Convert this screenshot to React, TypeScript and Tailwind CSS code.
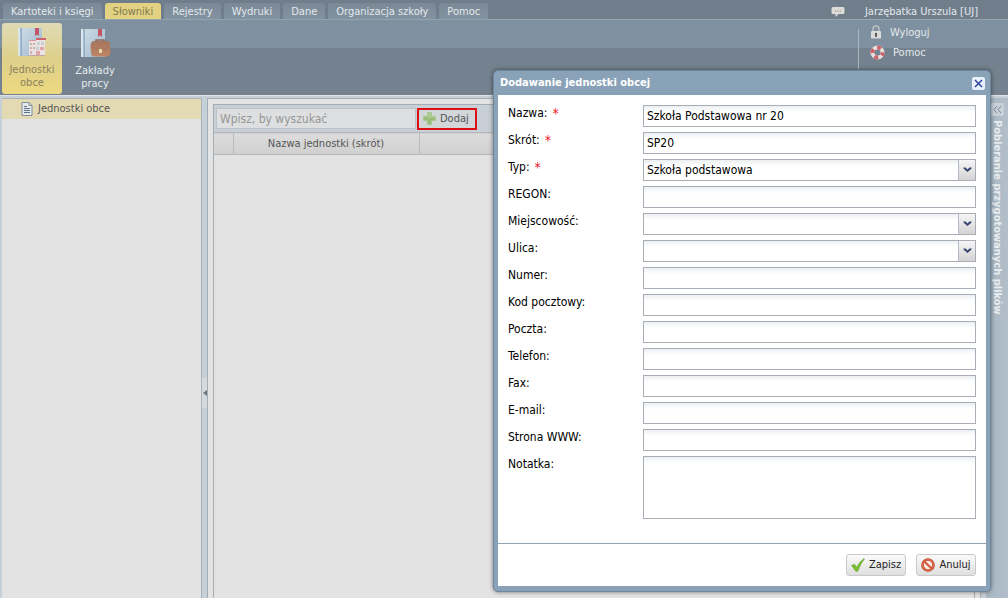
import React from "react";

type Field = { id: string; label: string; kind: "text" | "select" | "area"; value?: string; required?: boolean };

const tabs = ["Kartoteki i księgi", "Słowniki", "Rejestry", "Wydruki", "Dane", "Organizacja szkoły", "Pomoc"];

const fields: Field[] = [
  { id: "nazwa", label: "Nazwa:", kind: "text", value: "Szkoła Podstawowa nr 20", required: true },
  { id: "skrot", label: "Skrót:", kind: "text", value: "SP20", required: true },
  { id: "typ", label: "Typ:", kind: "select", value: "Szkoła podstawowa", required: true },
  { id: "regon", label: "REGON:", kind: "text" },
  { id: "miejscowosc", label: "Miejscowość:", kind: "select" },
  { id: "ulica", label: "Ulica:", kind: "select" },
  { id: "numer", label: "Numer:", kind: "text" },
  { id: "kod", label: "Kod pocztowy:", kind: "text" },
  { id: "poczta", label: "Poczta:", kind: "text" },
  { id: "telefon", label: "Telefon:", kind: "text" },
  { id: "fax", label: "Fax:", kind: "text" },
  { id: "email", label: "E-mail:", kind: "text" },
  { id: "www", label: "Strona WWW:", kind: "text" },
  { id: "notatka", label: "Notatka:", kind: "area" },
];

function Book() {
  return (
    <g>
      <rect x="2" y="1" width="24" height="28" fill="#b9cad7" />
      <rect x="2" y="1" width="3" height="28" fill="#dde5ea" />
      <path d="M6 1h20v28H6z" fill="url(#cover)" />
      <rect x="4.500" y="1" width="1" height="28" fill="#6f93b3" />
      <path d="M19 1h4v8l-2-1.500L19 9z" fill="#c25568" />
    </g>
  );
}

function Defs() {
  return (
    <defs>
      <linearGradient id="cover" x1="0" y1="0" x2="1" y2="1">
        <stop offset="0" stopColor="#cddbe5" />
        <stop offset="1" stopColor="#9db7cc" />
      </linearGradient>
      <linearGradient id="leather" x1="0" y1="0" x2="0" y2="1">
        <stop offset="0" stopColor="#a5765d" />
        <stop offset="1" stopColor="#bf8565" />
      </linearGradient>
    </defs>
  );
}

function UnitsIcon() {
  return (
    <svg width="32" height="32" viewBox="0 0 32 32" aria-hidden="true">
      <Defs />
      <Book />
      <path d="M13 14h7v-3h9v17H13z" fill="#e9e2e0" />
      <path d="M20 11h10v2H20z" fill="#d1606b" />
      <path d="M13 13h7v1h-7z" fill="#dd9799" />
      <g fill="#cfb3b2">
        <path d="M14 16h2v2h-2zM17 16h2v2h-2zM14 20h2v2h-2zM17 20h2v2h-2zM14 24h2v3h-2z" />
        <path d="M24 20h4v3h-4zM20 24h4v4h-4z" fill="#e0a5a6" />
      </g>
      <path d="M21 15h3v3h-3zM25 15h3v3h-3zM20 20h3v3h-3z" fill="#c9d0d4" />
      <path d="M13 28h16v1H13z" fill="#bda6a3" />
    </svg>
  );
}

function WorkIcon() {
  return (
    <svg width="32" height="32" viewBox="0 0 32 32" aria-hidden="true">
      <Book />
      <path d="M17 14v-2h8v2" fill="none" stroke="#8d6a58" strokeWidth="1.500" />
      <path d="M15 13h13q3 0 3 4l.5 8q-1 3.500-4 3.500H15.500q-3 0-3.500-3.500l-.5-7q.5-5 3.500-5z" fill="url(#leather)" />
      <path d="M12 19q9.500 5 19 0" fill="none" stroke="#a0705a" strokeWidth=".6" />
      <rect x="20" y="21" width="3" height="4" rx="1" fill="#ece0aa" />
    </svg>
  );
}

function DocIcon() {
  return (
    <svg width="12" height="14" viewBox="0 0 12 14" aria-hidden="true">
      <path d="M1 .5h7l3 3v10H1z" fill="#e6e9ea" stroke="#83909b" />
      <path d="M8 .5v3h3" fill="none" stroke="#83909b" />
      <path d="M3 4.500h3M3 6.500h6M3 8.500h6M3 10.500h6" stroke="#5d7389" />
    </svg>
  );
}

function ChatIcon() {
  return (
    <svg width="14" height="12" viewBox="0 0 14 12" aria-hidden="true">
      <path d="M2 1h10q1.500 0 1.500 1.500v4Q13.500 8 12 8H7.500L4.500 11V8H2Q.5 8 .5 6.500v-4Q.5 1 2 1z" fill="#dddcd6" />
      <path d="M4 5h1.200M6.400 5h1.200M8.800 5H10" stroke="#888" />
    </svg>
  );
}

function LockIcon() {
  return (
    <svg width="12" height="14" viewBox="0 0 12 14" aria-hidden="true">
      <path d="M3 7V4q0-3 3-3t3 3v3" fill="none" stroke="#b9bfc3" strokeWidth="1.500" />
      <rect x="1" y="6" width="10" height="7.500" rx="1" fill="#dcdcda" />
      <path d="M6 7.800a1.200 1.200 0 0 1 .8 2V12H5.200V9.800a1.200 1.200 0 0 1 .8-2z" fill="#444b50" />
    </svg>
  );
}

function BuoyIcon() {
  return (
    <svg width="15" height="15" viewBox="0 0 16 16" aria-hidden="true">
      <circle cx="8" cy="8" r="5.400" fill="none" stroke="#e6dedb" strokeWidth="4.200" />
      <circle cx="8" cy="8" r="5.400" fill="none" stroke="#cb626a" strokeWidth="4.200" strokeDasharray="4.240 4.242" strokeDashoffset="1" />
    </svg>
  );
}

function PlusIcon() {
  return (
    <svg width="13" height="13" viewBox="0 0 13 13" aria-hidden="true">
      <path d="M4.500 .5h4v4h4v4h-4v4h-4v-4h-4v-4h4z" fill="#98bd78" stroke="#a9c795" />
      <path d="M5 1h3v4h4v1H5z" fill="#a9cd8a" />
    </svg>
  );
}

function CheckIcon() {
  return (
    <svg width="14" height="14" viewBox="0 0 14 14" aria-hidden="true">
      <path d="M.5 7.500 3.500 6.200l2 3Q8.500 3.500 13 .5l.5.500Q9.500 5.500 6.800 13.300H4.800z" fill="#79bd2f" stroke="#5f9f27" strokeWidth=".5" />
    </svg>
  );
}

function BanIcon() {
  return (
    <svg width="14" height="14" viewBox="0 0 14 14" aria-hidden="true">
      <circle cx="7" cy="7" r="5.500" fill="#f6eeea" stroke="#b8482f" strokeWidth="2.600" />
      <circle cx="7" cy="7" r="5.500" fill="none" stroke="#e0694c" strokeWidth="1.600" />
      <path d="M3.200 3.500l7.500 7" stroke="#d4593c" strokeWidth="2.200" />
    </svg>
  );
}

const inputClass =
  "block h-[22px] w-full border border-[#a9adb6] bg-white bg-linear-to-b from-[#eceff2] to-white to-30% px-[3px] text-black outline-none";

function FieldRow({ field }: { field: Field }) {
  return (
    <div className="flex items-start">
      <label htmlFor={field.id} className="flex w-[135px] shrink-0 gap-[5px] leading-4">
        {field.label}
        {field.required && <span className="text-[14px] text-[#f0141e]">*</span>}
      </label>
      <div className="relative min-w-0 flex-1">
        {field.kind === "text" && <input id={field.id} type="text" defaultValue={field.value} className={inputClass} />}
        {field.kind === "area" && (
          <textarea
            id={field.id}
            className="block h-[63px] w-full resize-none border border-[#a9adb6] bg-white bg-linear-to-b from-[#eceff2] to-white to-10% px-[3px] outline-none"
          />
        )}
        {field.kind === "select" && (
          <>
            <select id={field.id} className={inputClass + " appearance-none"}>
              <option>{field.value ?? ""}</option>
            </select>
            <span className="pointer-events-none absolute inset-y-px right-px flex w-[17px] items-center justify-center border-l border-[#b5b8c8] bg-linear-to-b from-[#f6f6f6] to-[#d3d3d3]">
              <svg width="9" height="6" viewBox="0 0 9 6" aria-hidden="true">
                <path d="M.5 .5h2l2 2 2-2h2v1l-4 3.500-4-3.500z" fill="#35426f" />
              </svg>
            </span>
          </>
        )}
      </div>
    </div>
  );
}

function FooterButton({ icon, children }: { icon: React.ReactNode; children: React.ReactNode }) {
  return (
    <button
      type="button"
      className="flex h-[22px] w-[60px] items-center justify-center gap-1 rounded-[3px] border border-[#c9c9c9] bg-linear-to-b from-[#fafafa] to-[#dfdfdf] text-[11px] text-[#222]"
    >
      {icon}
      {children}
    </button>
  );
}

function UnitDialog() {
  return (
    <section
      role="dialog"
      aria-labelledby="dialog-title"
      className="absolute top-[70px] right-[17px] w-[498px] rounded-[5px] border border-[#7087a0] bg-[#89a2b8] px-1 pb-[5px] shadow-[0_0_4px_rgba(0,0,0,0.5)]"
    >
      <header className="flex h-6 items-center justify-between pr-px pl-[2px]">
        <h2 id="dialog-title" className="text-[11px] font-bold text-white">
          Dodawanie jednostki obcej
        </h2>
        <button
          type="button"
          aria-label="Zamknij"
          className="flex size-[13px] items-center justify-center rounded-[2px] bg-[#e8f1fb]"
        >
          <svg width="9" height="9" viewBox="0 0 9 9" aria-hidden="true">
            <path d="M1 1l7 7M8 1L1 8" stroke="#33479a" strokeWidth="1.500" />
          </svg>
        </button>
      </header>
      <form className="bg-white" onSubmit={(e) => e.preventDefault()}>
        <div className="flex flex-col gap-[5px] px-[10px] pt-[10px] pb-6">
          {fields.map((f) => (
            <FieldRow key={f.id} field={f} />
          ))}
        </div>
        <footer className="flex justify-end gap-[10px] border-t border-[#8fa3b5] p-[10px]">
          <FooterButton icon={<CheckIcon />}>Zapisz</FooterButton>
          <FooterButton icon={<BanIcon />}>Anuluj</FooterButton>
        </footer>
      </form>
    </section>
  );
}

export default function App() {
  return (
    <div className="relative flex min-h-screen flex-col bg-[#c6ced6] font-['DejaVu_Sans_Condensed','Noto_Sans',sans-serif] text-[12px] leading-4">
      <header className="text-[#e4e9ed]">
        <div className="flex h-[19px] items-end justify-between bg-[#6f7e8a] pl-[3px] text-[11px]">
          <nav className="flex gap-[3px]">
            {tabs.map((t) => (
              <a
                key={t}
                href="#"
                className={
                  t === "Słowniki"
                    ? "rounded-t-[3px] bg-[#e2d281] px-2 pt-px leading-[15px] text-[#827a52]"
                    : "rounded-t-[3px] bg-linear-to-b from-[#798996] to-[#8292a0] px-2 pt-px leading-[15px]"
                }
              >
                {t}
              </a>
            ))}
          </nav>
          <div className="flex items-center gap-5 pt-px pr-[30px] leading-[15px]">
            <ChatIcon />
            <span>Jarzębatka Urszula [UJ]</span>
          </div>
        </div>
        <div className="flex h-[76px] justify-between border-t border-[#93a3b0] bg-linear-to-b from-[#7f91a0] from-38% to-[#73828e] to-38% pl-[2px] text-[11px]">
          <div className="flex gap-[3px] pt-[3px] text-center leading-[13px]">
            <button
              type="button"
              className="flex h-[71px] w-[60px] flex-col items-center rounded-[3px] bg-linear-to-b from-[#e0dbb5] via-[#dfcf8b] to-[#ecd97f] pt-1 text-[#8a825f]"
            >
              <UnitsIcon />
              <span className="pt-1">Jednostki obce</span>
            </button>
            <button type="button" className="flex h-[71px] w-[60px] flex-col items-center rounded-[3px] pt-[5px]">
              <WorkIcon />
              <span className="pt-1">Zakłady pracy</span>
            </button>
          </div>
          <div className="flex w-[150px] pt-[9px]">
            <div className="flex h-10 flex-col gap-1 border-l border-[#a9b7c3] pl-[11px] leading-4">
              <a href="#" className="-mt-1 flex items-start gap-2">
                <LockIcon />
                Wyloguj
              </a>
              <a href="#" className="flex items-start gap-2">
                <BuoyIcon />
                Pomoc
              </a>
            </div>
          </div>
        </div>
      </header>

      <div className="flex flex-1 border-t border-[#dfe3e8] pt-[2px] text-[11px] text-[#555]">
        <aside className="ml-[2px] w-[200px] border-t border-r border-[#a9b3bc] bg-[#e3e3e3]">
          <a href="#" className="flex h-5 items-center gap-[5px] bg-[#e3d9b2] pl-[19px]">
            <DocIcon />
            Jednostki obce
          </a>
        </aside>
        <div className="flex w-[5px] flex-col justify-center bg-[#c6d0d8] pt-[90px]">
          <div className="flex h-[30px] items-center justify-center bg-[#d3d9dd]">
            <svg width="4" height="6" viewBox="0 0 4 6" aria-hidden="true">
              <path d="M4 0v6L0 3z" fill="#6d767d" />
            </svg>
          </div>
        </div>
        <main className="flex flex-1 flex-col border-x border-t border-[#a3adb6] bg-[#e3e3e3] px-[5px] pt-[5px]">
          <div className="flex flex-1 flex-col border-x border-t border-[#a3adb6]">
            <div className="flex h-[27px] items-center gap-px bg-[#c9cfd6] pl-[2px]">
              <input
                type="search"
                aria-label="Wyszukaj"
                placeholder="Wpisz, by wyszukać"
                className="h-[21px] w-[200px] border border-[#bcc3c9] bg-[#dedfe0] px-[3px] text-[12px] outline-none placeholder:text-[#969696]"
              />
              <button
                type="button"
                className="flex h-[22px] w-[60px] items-center gap-1 border-2 border-[#dd0f12] bg-[#d3d6d9] pl-1"
              >
                <PlusIcon />
                Dodaj
              </button>
            </div>
            <table className="w-full table-fixed border-collapse">
              <thead>
                <tr className="h-[22px] border-y border-[#b3b8bc] bg-linear-to-b from-[#dcdcdc] to-[#d0d0d0]">
                  <th aria-label="Lp." className="w-[19px] border-r border-[#b8bcc0]" />
                  <th className="w-[186px] border-r border-[#b8bcc0] font-normal">Nazwa jednostki (skrót)</th>
                  <th aria-label="Dane" />
                </tr>
              </thead>
            </table>
          </div>
        </main>
        <div className="w-[5px]" />
        <aside className="flex w-[22px] flex-col items-center gap-1 bg-linear-to-r from-[#a8b7c3] to-[#b2bfca] pt-[5px]">
          <button type="button" aria-label="Rozwiń" className="flex size-[13px] items-center justify-center rounded-[2px] bg-[#c9d1d8]">
            <svg width="9" height="9" viewBox="0 0 9 9" aria-hidden="true">
              <path d="M4 1L1 4.500 4 8M8 1L5 4.500 8 8" fill="none" stroke="#74869a" />
            </svg>
          </button>
          <span className="text-[11px] leading-4 font-bold whitespace-nowrap text-[#e8ecef] [writing-mode:vertical-rl]">
            Pobieranie przygotowanych plików
          </span>
        </aside>
      </div>
      <UnitDialog />
    </div>
  );
}
